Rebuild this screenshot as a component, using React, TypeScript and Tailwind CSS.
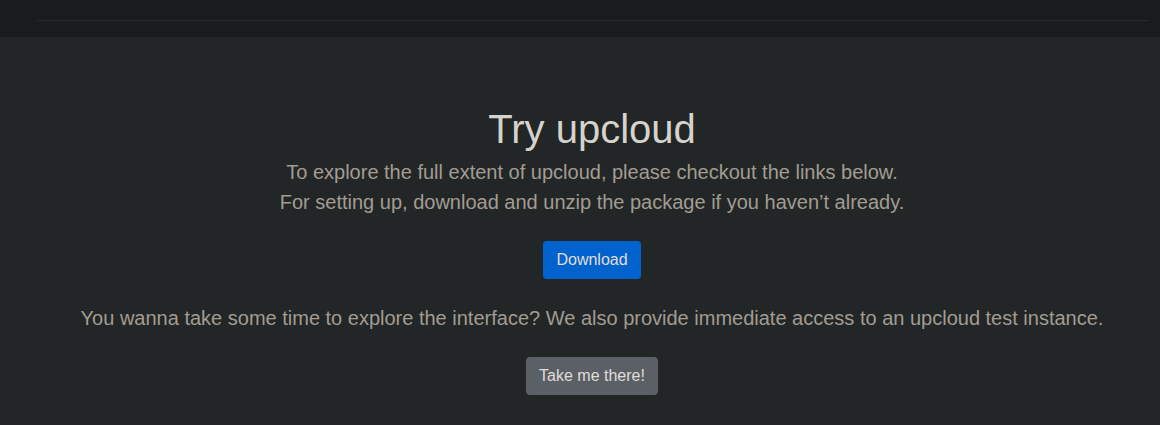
export default function App() {
  return (
    <div className="min-h-[425px] bg-[#222627]" style={{ fontFamily: '"Liberation Sans", Arial, sans-serif' }}>
      <header className="h-[37px] bg-[#191b1d] pl-[37px] pr-[12px] pt-[20px]">
        <div className="h-px bg-[#2a2c2f]" />
      </header>
      <main className="flex flex-col items-center pl-[24px] pt-[68px] text-center">
        <h1 className="text-[40px] leading-[48px] text-[#d6d2cc]">Try upcloud</h1>
        <p className="mt-[4px] text-[20px] leading-[30px] text-[#a39c92]">
          To explore the full extent of upcloud, please checkout the links below.
          <br />
          For setting up, download and unzip the package if you haven’t already.
        </p>
        <button className="mt-[24px] h-[38px] rounded-[4px] bg-[#0062cc] px-[13px] text-[16px] text-[#e0ddd8]">
          Download
        </button>
        <p className="mt-[24px] text-[20px] leading-[30px] text-[#a39c92]">
          You wanna take some time to explore the interface? We also provide immediate access to an upcloud test instance.
        </p>
        <button className="mt-[24px] h-[38px] rounded-[4px] bg-[#5a6065] px-[13px] text-[16px] text-[#e0ddd8]">
          Take me there!
        </button>
      </main>
    </div>
  );
}
